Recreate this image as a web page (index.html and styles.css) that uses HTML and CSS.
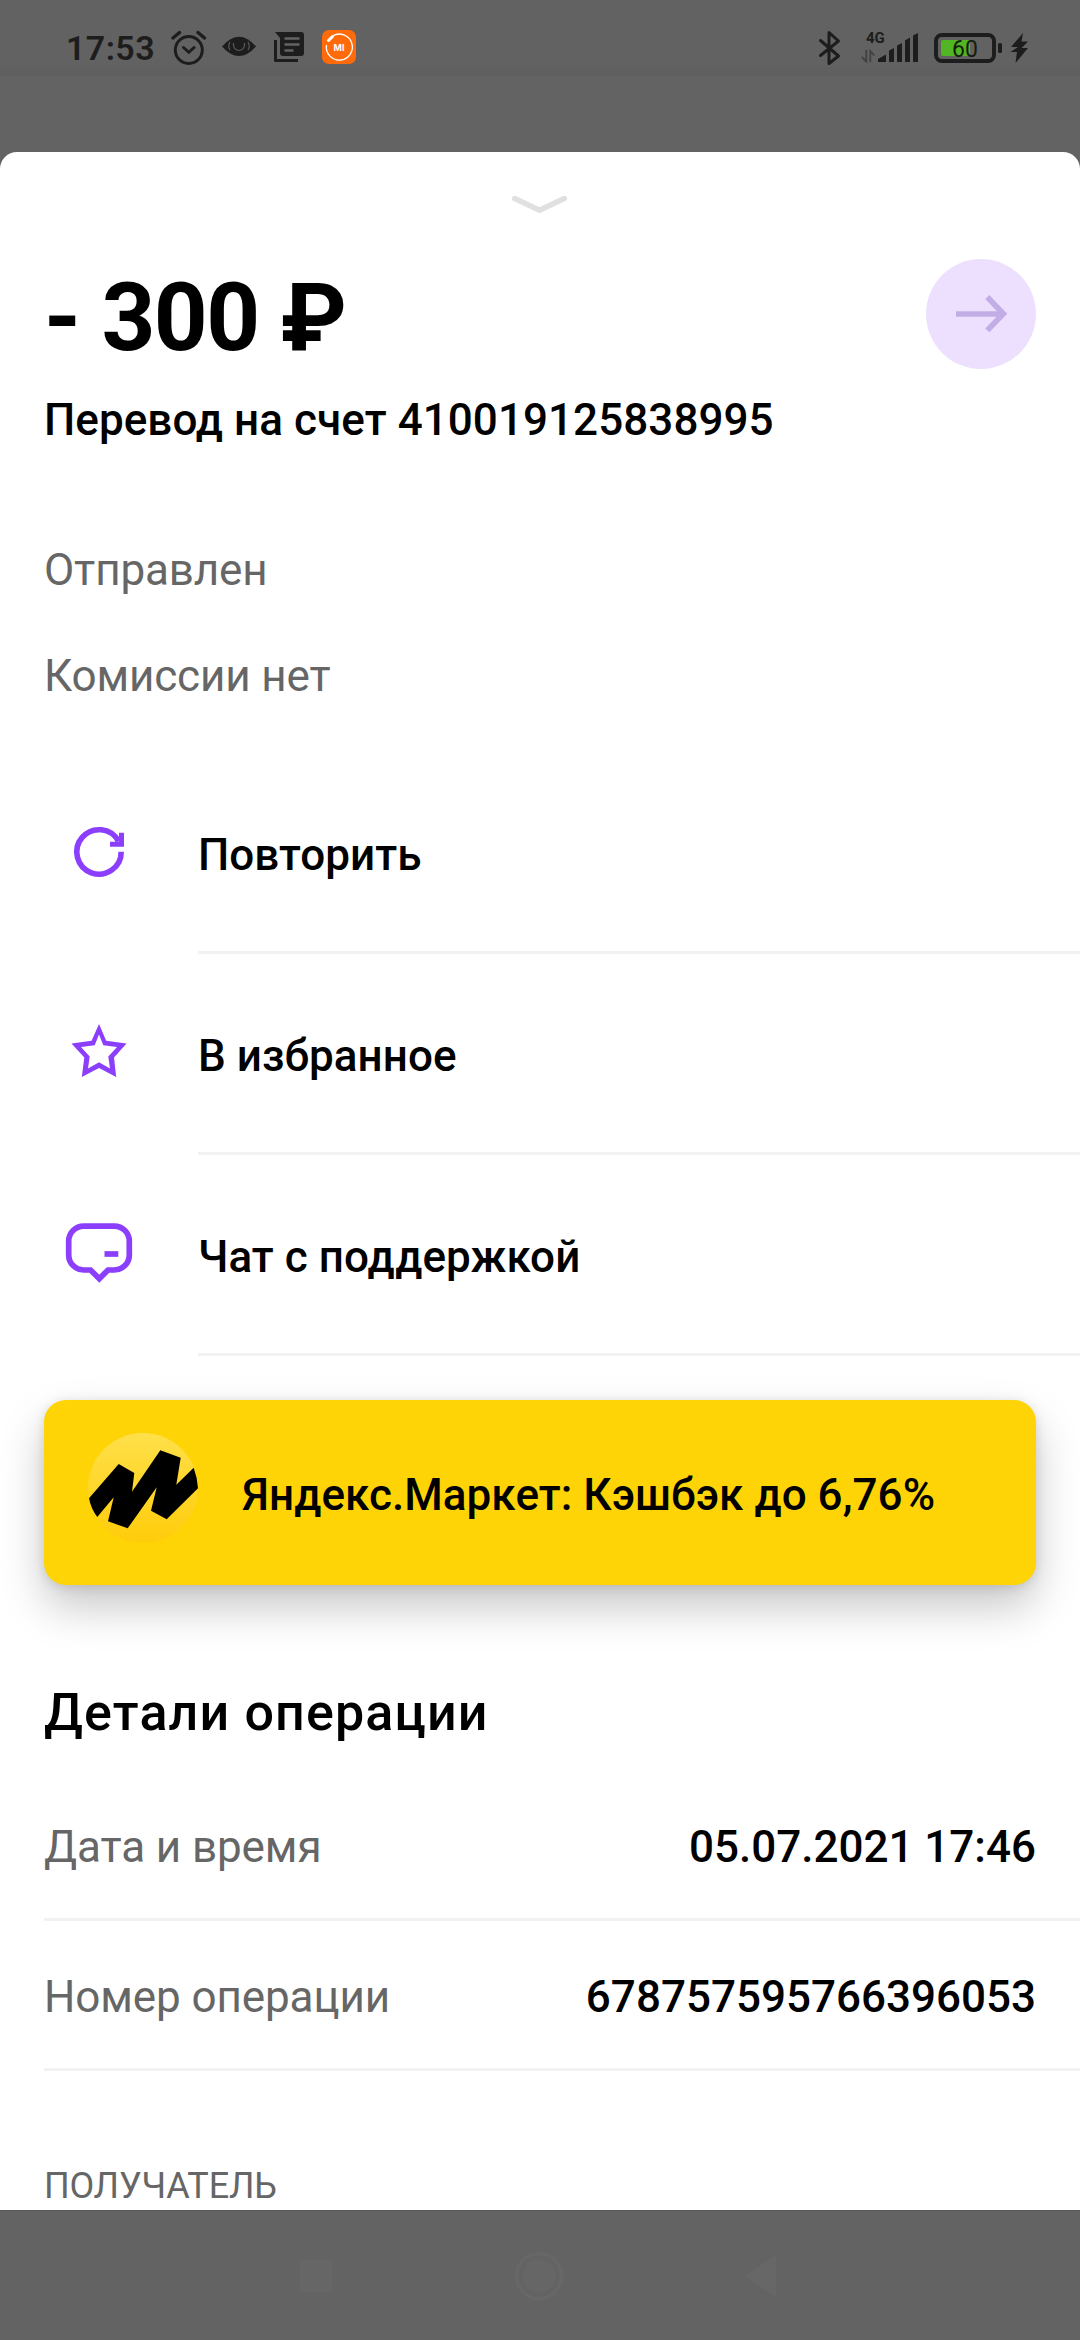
FILE: index.html
```html
<!DOCTYPE html>
<html lang="ru">
<head>
<meta charset="utf-8">
<title>Детали операции</title>
<link rel="stylesheet" href="styles.css">
</head>
<body>
<div class="screen">
  <header class="status">
    <span class="time">17:53</span>
    <svg width="44" height="76" viewBox="171 0 44 76" fill="none" stroke="#1d1d1d" stroke-width="3" stroke-linecap="round"><circle cx="188.8" cy="50" r="13.5"/><path d="M183.5 47.5l5.3 4.8 5.3-4.8"/><path d="M173 38l6.500-5.500M204.500 38l-6.500-5.500" stroke-width="3.400"/></svg>
    <svg width="48" height="76" viewBox="215 0 48 76"><path d="M222 46.500Q239 27 256 46.500Q239 65.500 222 46.500Z" fill="#1d1d1d"/><path d="M233.500 43v2a5.500 5.500 0 0 0 11 0v-2M230 42q-2.500 4.500 0 8M248 42q2.500 4.500 0 8" fill="none" stroke="#5a5a5a" stroke-width="1.200"/></svg>
    <svg width="50" height="76" viewBox="263 0 50 76"><path d="M275 32H301a3 3 0 0 1 3 3V53a3 3 0 0 1-3 3H283a3 3 0 0 1-3-3V38Z" fill="#1d1d1d"/><path d="M275.500 40V60.500H298" fill="none" stroke="#1d1d1d" stroke-width="3" stroke-linejoin="round"/><path d="M284.500 38.500h15M284.500 44.500h15M284.500 50.500h9" stroke="#636363" stroke-width="2.400"/></svg>
    <svg width="50" height="76" viewBox="313 0 50 76"><rect x="322" y="30" width="34" height="34" rx="7" fill="#ff6a0a"/><path d="M332.500 36a13 13 0 1 1-6 9" fill="none" stroke="#fff" stroke-width="1.300"/><path d="M328.500 40.500l4-4" stroke="#fff" stroke-width="3" stroke-linecap="round"/><text x="339" y="50.500" class="brand">MI</text></svg>
    <div class="status-right">
      <svg width="40" height="76" viewBox="810 0 40 76" fill="none" stroke="#1d1d1d" stroke-width="3" stroke-linejoin="round" stroke-linecap="round"><path d="M820.500 40.500L838.500 56L829 63.500V32.500L838.500 41L820.500 55.500"/></svg>
      <svg width="75" height="76" viewBox="850 0 75 76"><text x="866" y="43" class="net">4G</text><path d="M866.300 50v11.500l-4.500-4.500M870.300 62V51l4 4.500" fill="none" stroke="#414141" stroke-width="1.800"/><path d="M878 62v-3l8-4.500V62ZM889 62V50.500l5-2.500V62ZM897 62V45.500l5-2.500V62ZM905 62V40.500l5-3V62ZM913 62V35.500l5-2.500V62Z" fill="#1d1d1d"/></svg>
      <svg width="80" height="76" viewBox="925 0 80 76"><rect x="936" y="35" width="58" height="26" rx="6" fill="none" stroke="#1d1d1d" stroke-width="4"/><path d="M943 40h27v16h-27a2 2 0 0 1-2-2V42a2 2 0 0 1 2-2Z" fill="#52b524"/><rect x="998" y="43" width="4" height="10" rx="1.500" fill="#1d1d1d"/><text x="965" y="56.500" class="level">60</text></svg>
      <svg width="30" height="76" viewBox="1005 0 30 76"><path d="M1023 33l-12 14h7l-7.500 5h6.500l-1.500 11 12.500-15h-6.500l6.500-6.500h-6.500Z" fill="#1d1d1d"/></svg>
    </div>
  </header>

  <main class="sheet">
    <svg class="handle" width="60" height="24" viewBox="510 193 60 24" fill="none" stroke="#e0e0e0" stroke-width="5.500" stroke-linecap="round"><path d="M514.700 198.500L539.500 210.200L564.300 198.500"/></svg>

    <section class="summary">
      <h1 class="amount">- 300 ₽</h1>
      <svg class="avatar" width="110" height="110" viewBox="0 0 110 110"><circle cx="55" cy="55" r="55" fill="#ede0fe"/><path d="M30 55H77M61.300 38L77.300 54.700L61.300 71.400" fill="none" stroke="#c3ade6" stroke-width="5.700"/></svg>
    </section>
    <p class="title">Перевод на счет 410019125838995</p>
    <p class="note">Отправлен</p>
    <p class="note fee">Комиссии нет</p>

    <ul class="actions">
      <li class="action">
        <svg width="110" height="110" viewBox="0 0 110 110" fill="none" stroke="#8b3ffd" stroke-width="5.600"><path d="M77.200 54.700A22.200 22.200 0 1 1 74.500 44.300"/><path d="M66 47.300H77.500V35.700" stroke-width="5"/></svg>
        <span class="label">Повторить</span>
      </li>
      <li class="action">
        <svg width="110" height="110" viewBox="0 0 110 110"><path fill="#8b3ffd" fill-rule="evenodd" d="M55 26L62.200 42.700L82.500 45.500L70 59.500L72.200 78.900L55 70L37.800 78.900L40.300 59.500L27.500 45.500L47.600 42.700ZM55 36.500L59.300 47.300L73 49L64.300 58.500L66 70.500L55 64.300L44 70.500L45.700 58.500L37 49L50.700 47.300Z"/></svg>
        <span class="label">В избранное</span>
      </li>
      <li class="action">
        <svg width="110" height="110" viewBox="0 0 110 110" fill="none" stroke="#8b3ffd" stroke-width="5.700"><path d="M39.700 27.200H70.300A15 15 0 0 1 85.300 42.200V56A15 15 0 0 1 70.300 71H64L55.300 79.700L46.500 71H39.700A15 15 0 0 1 24.700 56V42.200A15 15 0 0 1 39.700 27.200Z"/><path d="M60.500 55H74.300"/></svg>
        <span class="label">Чат с поддержкой</span>
      </li>
    </ul>

    <section class="banner">
      <svg width="110" height="110" viewBox="0 0 110 110"><defs><linearGradient id="glow" x1="0" y1="0" x2="0" y2="1"><stop offset="0" stop-color="#ffe04a"/><stop offset="1" stop-color="#ffcc0a"/></linearGradient></defs><circle cx="55" cy="55" r="55" fill="url(#glow)"/><path d="M1 65.300L30.700 31L46.300 40L44 58.700L72.300 17.300L92.700 24.700L88.300 51.700L105.700 34.700Q109.500 45 110 55.300L78.700 86.300L63 77.700L68.700 54.300L39.700 95.300L20 88.300L25.700 64.300L9.300 84Q3 76 1 65.300Z"/></svg>
      <span class="offer">Яндекс.Маркет: Кэшбэк до 6,76%</span>
    </section>

    <h2 class="details-title">Детали операции</h2>
    <dl class="details">
      <div class="row"><dt>Дата и время</dt><dd>05.07.2021 17:46</dd></div>
      <div class="row"><dt>Номер операции</dt><dd>678757595766396053</dd></div>
    </dl>
    <h3 class="section">ПОЛУЧАТЕЛЬ</h3>
  </main>

  <nav class="nav">
    <svg width="32" height="32"><rect width="32" height="32" rx="2" fill="#666"/></svg>
    <svg width="50" height="50" viewBox="-25 -25 50 50"><circle r="22.500" fill="none" stroke="#676767" stroke-width="3.500"/><circle r="17" fill="#666"/></svg>
    <svg width="32" height="42"><path d="M0 21L31 0V42Z" fill="#676767"/></svg>
  </nav>
</div>
</body>
</html>
```
FILE: styles.css
```css
* { box-sizing: border-box; margin: 0; padding: 0; }
body { background: #636363; }
svg { display: block; flex: none; }
.screen {
  width: 1080px;
  height: 2340px;
  display: flex;
  flex-direction: column;
  background: #636363;
  font-family: Roboto, "Liberation Sans", sans-serif;
  color: #000;
  overflow: hidden;
}
.status {
  flex: none;
  height: 76px;
  margin-bottom: 76px;
  padding: 0 45px 0 66px;
  display: flex;
  background: linear-gradient(#626262 62px, #5f5f5f);
}
.time {
  width: 105px;
  line-height: 97px;
  font-size: 34px;
  font-weight: 600;
  letter-spacing: 0.4px;
  color: #1d1d1d;
}
.status-right { display: flex; margin-left: auto; }
.brand { font: 700 9px Inter, sans-serif; fill: #fff; text-anchor: middle; }
.net { font: 700 15px Roboto, sans-serif; fill: #1d1d1d; }
.level { font: 400 23px Roboto, sans-serif; fill: #14200c; text-anchor: middle; }

.sheet {
  flex: none;
  height: 2058px;
  padding: 41px 0 0 44px;
  border-radius: 17px 17px 0 0;
  background: #fff;
  overflow: hidden;
}
.handle { margin: 0 auto 42px 466px; }
.summary { display: flex; justify-content: space-between; padding-right: 44px; }
.amount { font-size: 94px; line-height: 119px; font-weight: 700; letter-spacing: -1.5px; }
.title { margin-top: 14px; font-size: 44px; line-height: 56px; font-weight: 500; letter-spacing: 0.06px; }
.note { margin-top: 94px; font-size: 44px; line-height: 56px; color: #666; letter-spacing: -0.15px; }
.fee { margin-top: 50px; }

.actions { list-style: none; margin-top: 49px; }
.action { height: 201px; display: flex; align-items: center; gap: 44px; }
.action svg { margin-bottom: 3px; }
.label {
  flex: 1;
  height: 201px;
  padding-top: 6px;
  border-bottom: 3px solid #f2f2f2;
  font-size: 44px;
  line-height: 192px;
  font-weight: 500;
  letter-spacing: 0.06px;
}

.banner {
  height: 185px;
  margin: 44px 44px 0 0;
  padding: 33px 44px 0;
  display: flex;
  gap: 44px;
  border-radius: 22px;
  background: #ffd407;
  box-shadow: 0 22px 44px rgba(0, 0, 0, 0.22), 0 2px 12px rgba(0, 0, 0, 0.12);
}
.offer { font-size: 44px; line-height: 124px; font-weight: 500; white-space: nowrap; letter-spacing: 0.04px; }

.details-title { margin: 98px 0 28px; font-size: 52px; line-height: 60px; font-weight: 500; letter-spacing: 1.15px; }
.row {
  height: 150px;
  padding: 5px 44px 0 0;
  display: flex;
  justify-content: space-between;
  border-bottom: 3px solid #f2f2f2;
  font-size: 44px;
  line-height: 142px;
}
.row dt { color: #666; letter-spacing: -0.1px; }
.row dd { font-weight: 500; }
.section { margin-top: 93px; font-size: 36px; line-height: 44px; font-weight: 400; color: #666; letter-spacing: -0.15px; }

.nav {
  flex: 1;
  display: flex;
  align-items: center;
  justify-content: space-between;
  padding: 0 303px 0 300px;
  border-top: 1px solid #585858;
}
```
